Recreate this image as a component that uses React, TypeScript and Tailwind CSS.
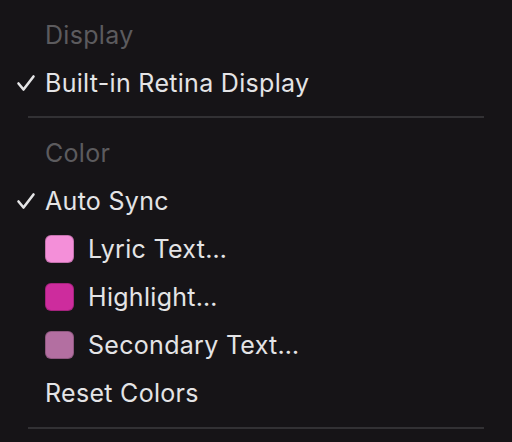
import { FC } from "react";

type Item = {
  label: string;
  checked?: boolean;
  swatch?: string;
};

const Check: FC = () => (
  <svg width="20" height="18" viewBox="0 0 20 18" className="absolute left-[16px]">
    <path
      d="M2.5 9.5 L7.5 15.5 L17.5 2.5"
      fill="none"
      stroke="#e4e4e6"
      strokeWidth="2.6"
      strokeLinecap="round"
      strokeLinejoin="round"
    />
  </svg>
);

const Header: FC<{ label: string }> = ({ label }) => (
  <div className="h-[48px] flex items-center pl-[45px] text-[#5c5b5e]">{label}</div>
);

const Row: FC<{ item: Item }> = ({ item }) => (
  <div className="relative h-[48px] flex items-center pl-[45px] text-[#e4e4e6]">
    {item.checked && <Check />}
    {item.swatch && (
      <span
        className="w-[29px] h-[28px] rounded-[6px] border border-black/20 mr-[14px] shrink-0"
        style={{ backgroundColor: item.swatch }}
      />
    )}
    <span>{item.label}</span>
  </div>
);

// 区切り線
const Separator: FC<{ className: string }> = ({ className }) => (
  <div className={`px-[28px] ${className}`}>
    <div className="h-[2px] w-full bg-[#323134]" />
  </div>
);

export default function App() {
  const colorItems: Item[] = [
    { label: "Auto Sync", checked: true },
    { label: "Lyric Text…", swatch: "#f48fd9" },
    { label: "Highlight…", swatch: "#cd2c9d" },
    { label: "Secondary Text…", swatch: "#b36fa1" },
    { label: "Reset Colors" },
  ];

  return (
    <div
      className="w-[512px] h-[442px] bg-[#161417] overflow-hidden pt-[11px] text-[25px] leading-none tracking-[0.3px]"
      style={{ fontFamily: "Inter, 'Noto Sans', sans-serif" }}
    >
      <Header label="Display" />
      <Row item={{ label: "Built-in Retina Display", checked: true }} />
      <Separator className="pt-[9px] pb-[11px]" />
      <Header label="Color" />
      {colorItems.map((item) => (
        <Row key={item.label} item={item} />
      ))}
      <Separator className="pt-[10px]" />
    </div>
  );
}
